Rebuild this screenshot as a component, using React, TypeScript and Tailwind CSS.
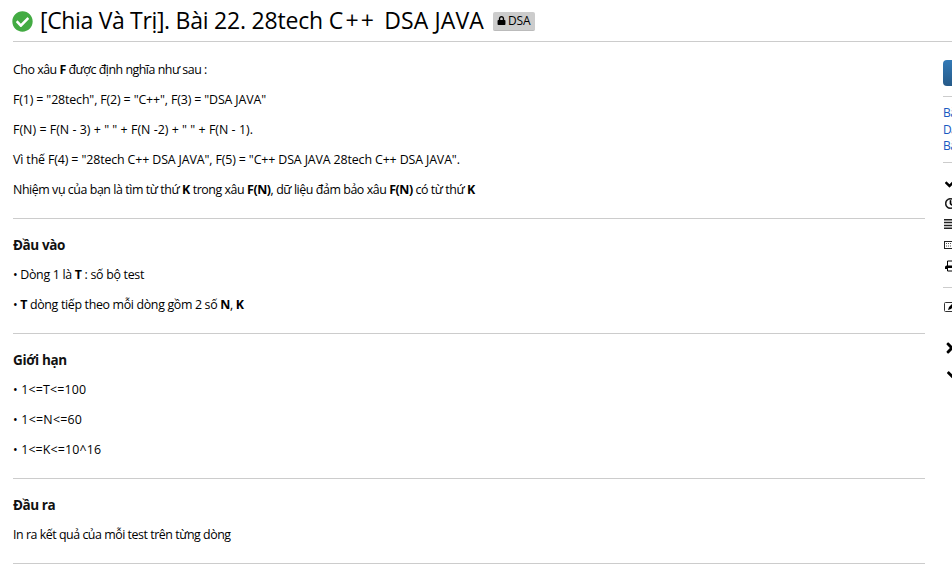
import type { ReactNode } from 'react';
import { FaCheck, FaCheckCircle, FaLock, FaRegClock, FaTimes } from 'react-icons/fa';

function Line({ children, className = '' }: { children: ReactNode; className?: string }) {
  return (
    <p className="flex h-[30px] items-center">
      <span className={`whitespace-pre ${className}`}>{children}</span>
    </p>
  );
}

function Section({ title, titleClass, children }: { title: string; titleClass: string; children: ReactNode }) {
  return (
    <section className="mt-[13px] border-t border-[#ccc] pt-[11px]">
      <h2 className="flex h-[30px] items-center text-[13.5px] font-bold text-[#111]">
        <span className={titleClass}>{title}</span>
      </h2>
      {children}
    </section>
  );
}

function SideRow({ className, children }: { className: string; children: ReactNode }) {
  return <div className={`flex items-center ${className}`}>{children}</div>;
}

function Sidebar() {
  return (
    <aside className="mt-[18px] w-[180px] shrink-0">
      <div className="h-[26px] rounded-[4px] bg-gradient-to-b from-[#337ab7] to-[#265a88]" />
      <div className="mt-[10px] h-[66px] border-t border-[#ccc] pt-[8px] text-[12px] leading-[16.5px] tracking-[-0.6px] text-[#1958c1]">
        <a className="block">Bài nộp của bạn</a>
        <a className="block">Danh sách bài nộp</a>
        <a className="block">Bài nộp tốt nhất</a>
      </div>
      <div className="h-[125px] border-t border-[#ccc] pt-[10px]">
        <SideRow className="h-[20px] pl-[2px]"><FaCheck size={12} /></SideRow>
        <SideRow className="h-[20px] pl-[2px]"><FaRegClock size={11} strokeWidth={20} stroke="currentColor" /></SideRow>
        <SideRow className="h-[21px] pl-px">
          <svg width="13" height="10" viewBox="0 0 13 10" fill="none" stroke="#222">
            <path d="M0 .8h13M0 3.6h13M0 6.4h13M0 9.2h13" strokeWidth="1.5" />
          </svg>
        </SideRow>
        <SideRow className="h-[22px] pl-px">
          <svg width="15" height="9" viewBox="0 0 15 9" fill="none" stroke="#222">
            <rect x=".5" y=".5" width="14" height="7" />
            <path d="M2 2.5h11M2 5h11" strokeDasharray="1 1" stroke="#555" />
          </svg>
        </SideRow>
        <SideRow className="h-[20px] pl-[2px]">
          <svg width="13" height="12" viewBox="0 0 13 12" fill="none" stroke="#000">
            <path d="M2.5 6V1h6l2 2v3M2.5 8v3h8V8" />
            <path d="M0 9V7.2Q0 5.5 1.7 5.5h9.6Q13 5.5 13 7.2V9h-2V8H2v1z" fill="#000" stroke="none" />
          </svg>
        </SideRow>
      </div>
      <div className="border-t border-[#ccc] pt-[9px]">
        <SideRow className="h-[20px] pl-px">
          <svg width="14" height="10" viewBox="0 0 14 10" fill="none" stroke="#333">
            <rect x=".5" y=".5" width="13" height="9" rx="1" />
            <path d="m4 8 1-3 3-3 2 2-3 3z" fill="#000" stroke="none" />
          </svg>
        </SideRow>
        <SideRow className="mt-[19px] h-[24px] pl-px"><FaTimes size={16} /></SideRow>
        <SideRow className="h-[25px] pl-[4px]"><FaCheck size={14} /></SideRow>
      </div>
    </aside>
  );
}

export default function App() {
  return (
    <div className="h-[572px] w-[952px] overflow-hidden bg-white pl-[13px] font-['Open_Sans','Noto_Sans',sans-serif] text-[12.4px] leading-5 text-black">
      <header className="flex h-[42px] items-center border-b border-[#ccc]">
        <FaCheckCircle size={21} className="mt-px -ml-px shrink-0 text-[#43ab43]" />
        <h1 className="mb-px ml-[7px] text-[23px] leading-[30px] whitespace-pre">
          <span className="tracking-[-0.34px]">[Chia Và Trị]. </span>
          <span className="tracking-[-0.2px]">Bài 22. 28tech </span>
          <span className="tracking-[2.2px]">C++ </span>
          <span className="tracking-[0.1px]">DSA JAVA</span>
        </h1>
        <span className="mt-px ml-[9px] flex h-[19px] w-[42px] items-center rounded-[2px] border-b border-[#bbb] bg-[#ccc] pl-1 text-[12px] tracking-[-0.1px]">
          <FaLock size={9} className="mr-[2px]" />DSA
        </span>
      </header>
      <div className="flex">
        <main className="mr-[18px] w-[912px] shrink-0 pt-[13px]">
          <Line className="tracking-[-0.48px]">Cho xâu <b>F</b> được định nghĩa như sau :</Line>
          <Line className="tracking-[-0.14px]">F(1) = "28tech", F(2) = "C++", F(3) = "DSA JAVA"</Line>
          <Line className="tracking-[0.03px]">F(N) = F(N - 3) + " " + F(N -2) + " " + F(N - 1).</Line>
          <Line className="tracking-[-0.13px]">Vì thế F(4) = "28tech C++ DSA JAVA", F(5) = "C++ DSA JAVA 28tech C++ DSA JAVA".</Line>
          <Line className="tracking-[-0.43px]">Nhiệm vụ của bạn là tìm từ thứ <b>K</b> trong xâu <b>F(N)</b>, dữ liệu đảm bảo xâu <b>F(N)</b> có từ thứ <b>K</b></Line>
          <Section title="Đầu vào" titleClass="tracking-[-0.4px]">
            <Line className="tracking-[-0.3px]">• Dòng 1 là <b>T</b> : số bộ test</Line>
            <Line className="tracking-[-0.33px]">• <b>T</b> dòng tiếp theo mỗi dòng gồm 2 số <b>N</b>, <b>K</b></Line>
          </Section>
          <Section title="Giới hạn" titleClass="tracking-[-0.35px]">
            <Line className="tracking-[0.18px]">• 1&lt;=T&lt;=100</Line>
            <Line className="tracking-[0.24px]">• 1&lt;=N&lt;=60</Line>
            <Line className="tracking-[0.14px]">• 1&lt;=K&lt;=10^16</Line>
          </Section>
          <Section title="Đầu ra" titleClass="tracking-[-0.45px]">
            <Line className="tracking-[-0.46px]">In ra kết quả của mỗi test trên từng dòng</Line>
          </Section>
          <hr className="mt-[13px] border-[#ccc]" />
        </main>
        <Sidebar />
      </div>
    </div>
  );
}
